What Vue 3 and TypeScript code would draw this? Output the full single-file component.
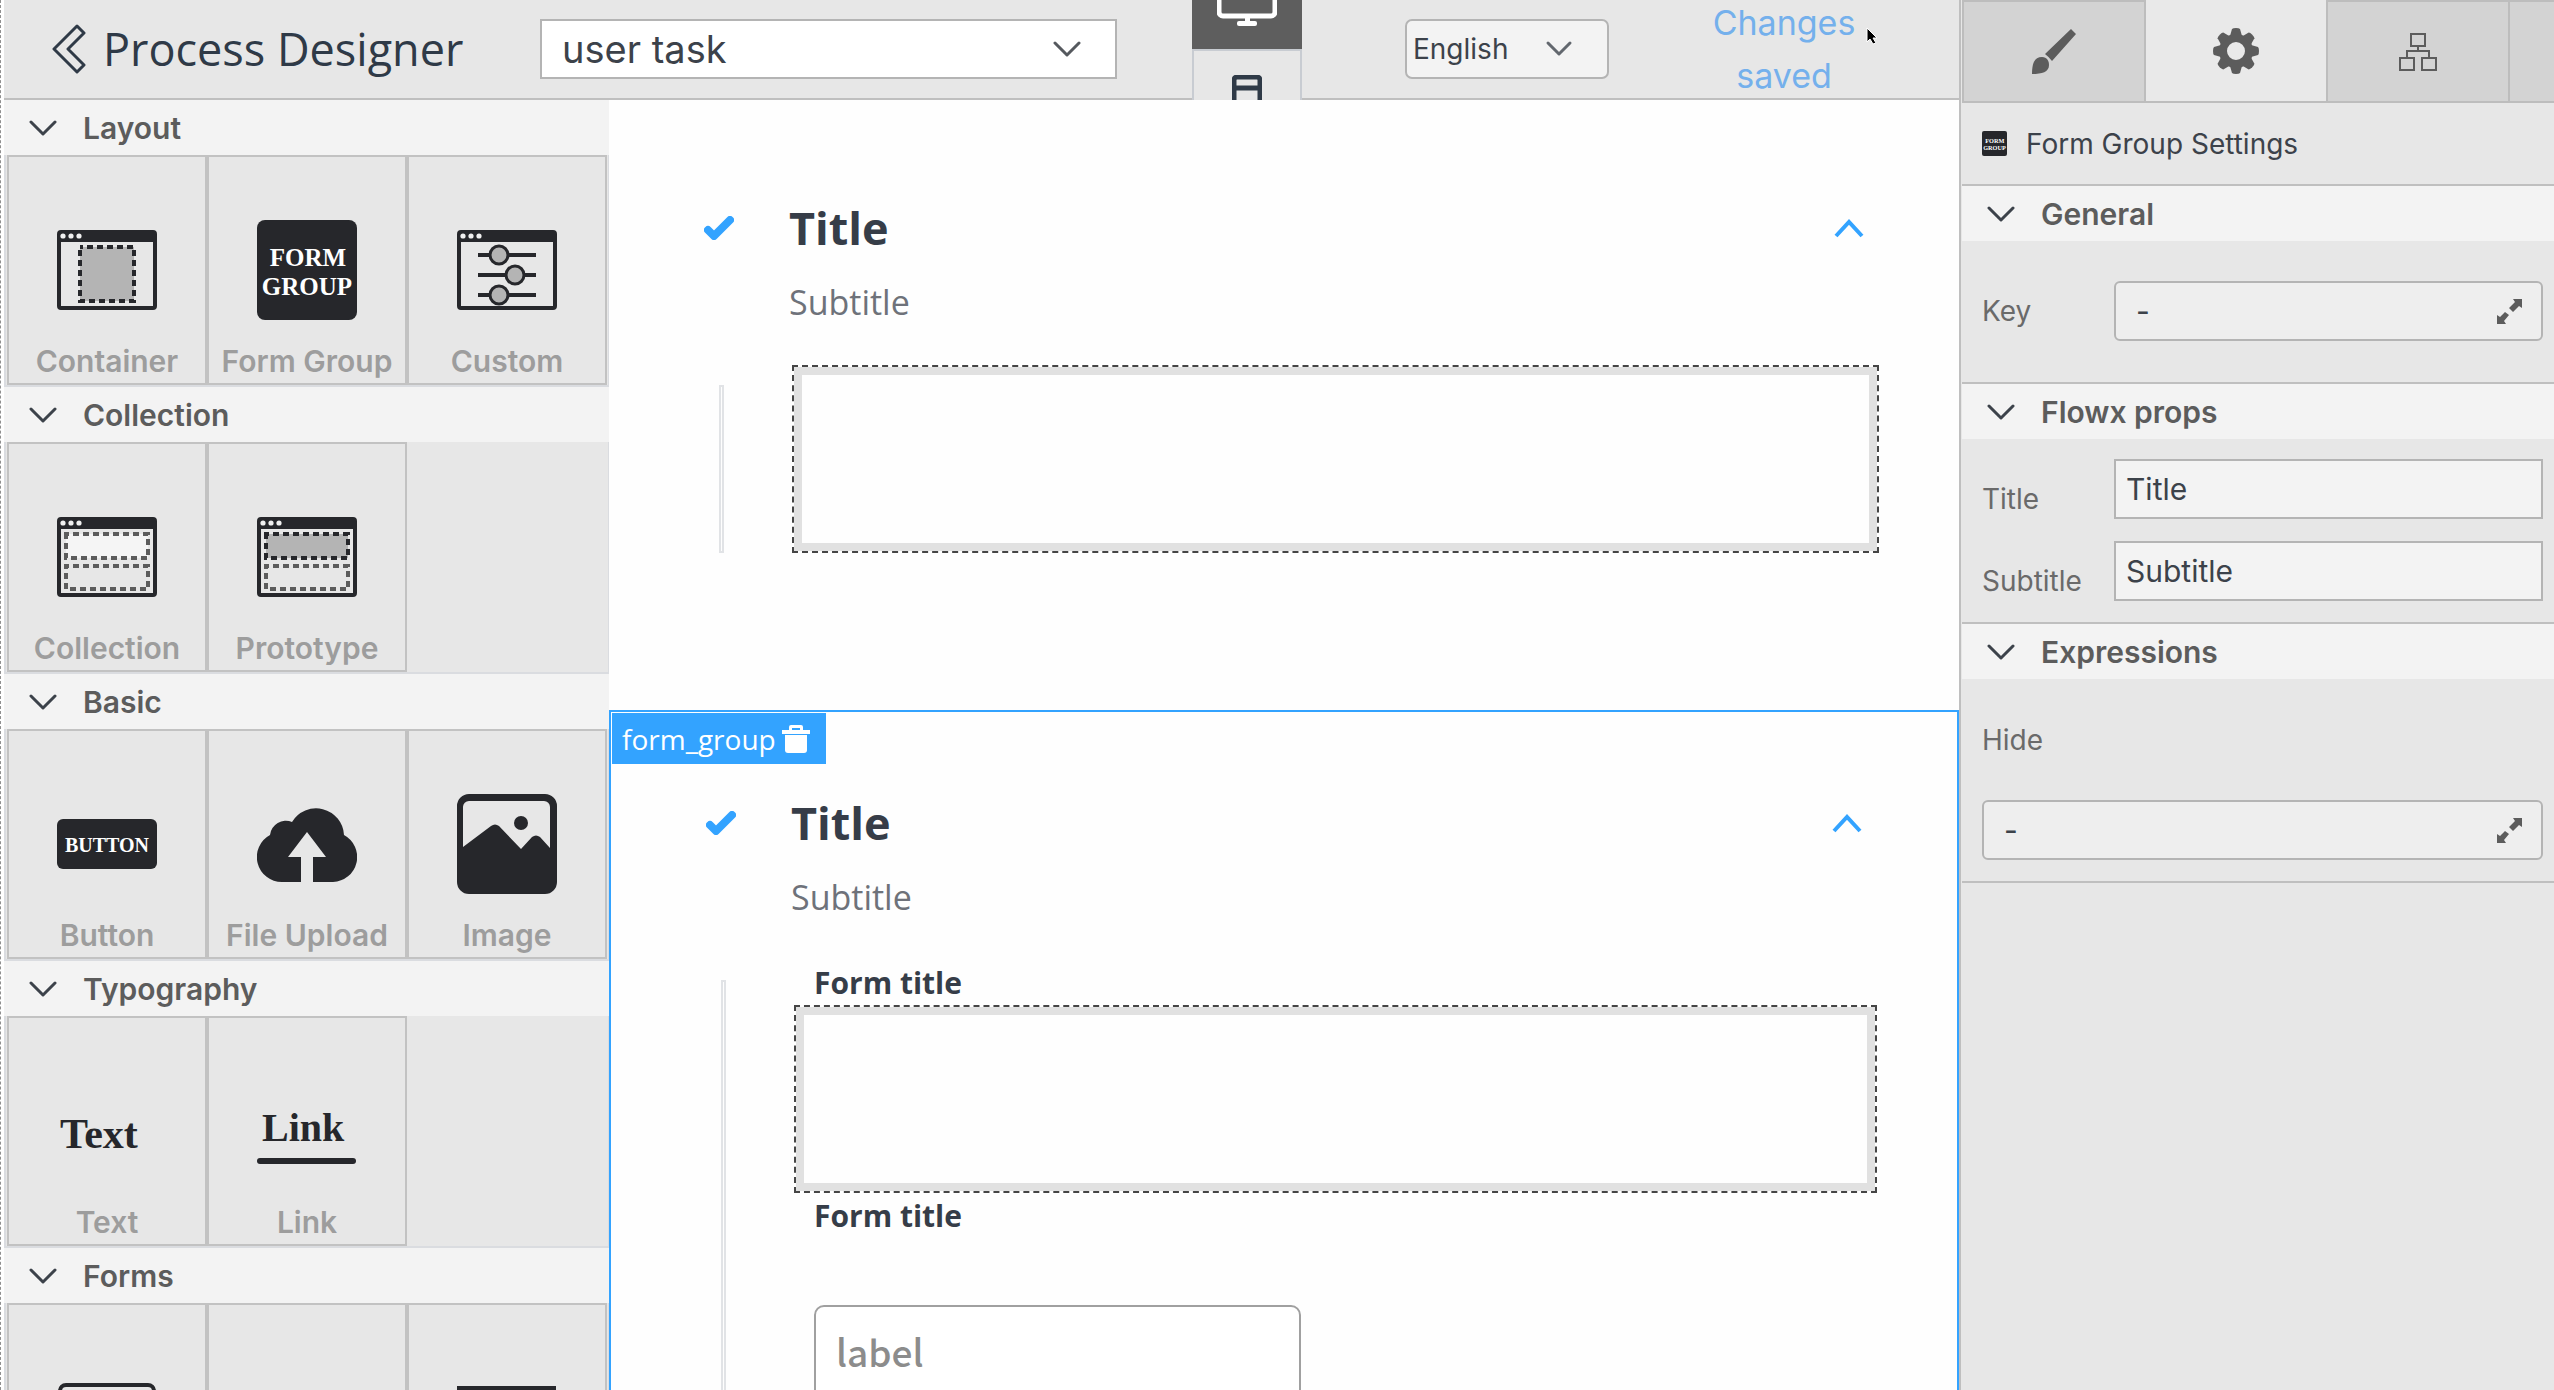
<script setup lang="ts">
import { ref } from 'vue'

interface PaletteItem {
  icon: string
  label: string
}
interface PaletteSection {
  title: string
  items: PaletteItem[]
}

const sections: PaletteSection[] = [
  {
    title: 'Layout',
    items: [
      { icon: 'container', label: 'Container' },
      { icon: 'group', label: 'Form Group' },
      { icon: 'custom', label: 'Custom' },
    ],
  },
  {
    title: 'Collection',
    items: [
      { icon: 'collection', label: 'Collection' },
      { icon: 'prototype', label: 'Prototype' },
    ],
  },
  {
    title: 'Basic',
    items: [
      { icon: 'button', label: 'Button' },
      { icon: 'upload', label: 'File Upload' },
      { icon: 'image', label: 'Image' },
    ],
  },
  {
    title: 'Typography',
    items: [
      { icon: 'text', label: 'Text' },
      { icon: 'link', label: 'Link' },
    ],
  },
  {
    title: 'Forms',
    items: [
      { icon: 'input', label: '' },
      { icon: 'blank', label: '' },
      { icon: 'select', label: '' },
    ],
  },
]

const windowIcons = ['container', 'custom', 'collection', 'prototype']
const teeth = [0, 45, 90, 135, 180, 225, 270, 315]

const task = ref('user task')
const language = ref('English')
const keyValue = ref('-')
const titleValue = ref('Title')
const subtitleValue = ref('Subtitle')
const hideValue = ref('-')
const fieldValue = ref('')
</script>

<template>
  <div class="app">
    <div class="workspace">
      <header class="topbar">
        <div class="brand">
          <button class="plain" type="button" aria-label="Back">
            <svg width="34" height="50" viewBox="0 0 34 50" fill="none" stroke="#2f3a47" stroke-width="3" stroke-linejoin="round">
              <path d="M25 2L2 25L25 48L32 41L16 25L32 9Z" />
            </svg>
          </button>
          <h1>Process Designer</h1>
        </div>
        <div class="picker task">
          <select v-model="task" aria-label="Task">
            <option>user task</option>
          </select>
          <svg width="28" height="18" viewBox="0 0 28 18" fill="none" stroke="#55595e" stroke-width="3" stroke-linecap="round" stroke-linejoin="round">
            <path d="M2 3L14 15L26 3" />
          </svg>
        </div>
        <div class="devices">
          <button class="device active" type="button" aria-label="Desktop">
            <svg width="60" height="52" viewBox="0 0 60 52">
              <rect x="2" y="2" width="56" height="40" rx="4" fill="none" stroke="#fff" stroke-width="5" />
              <path d="M28 42h5v9h-5z" fill="#fff" />
              <rect x="20" y="47" width="20" height="5" rx="2" fill="#fff" />
            </svg>
          </button>
          <button class="device" type="button" aria-label="Mobile">
            <svg width="30" height="48" viewBox="0 0 30 48" fill="none" stroke="#2f3a47" stroke-width="5">
              <rect x="2" y="2" width="26" height="44" rx="3" />
              <path d="M2 13h26" />
            </svg>
          </button>
        </div>
        <div class="picker language">
          <select v-model="language" aria-label="Language">
            <option>English</option>
          </select>
          <svg width="28" height="18" viewBox="0 0 28 18" fill="none" stroke="#62676e" stroke-width="3" stroke-linecap="round" stroke-linejoin="round">
            <path d="M3 3L14 14L25 3" />
          </svg>
        </div>
        <p class="status">Changes saved</p>
        <svg class="pointer" width="14" height="20" viewBox="0 0 14 20">
          <path d="M2 2V16L5 13L8 18L11 17L8 12H12Z" fill="#000" stroke="#fff" stroke-width="1" />
        </svg>
      </header>

      <div class="columns">
        <nav class="palette">
          <section v-for="section in sections" :key="section.title">
            <button class="fold" type="button">
              <svg width="28" height="18" viewBox="0 0 28 18" fill="none" stroke="#3c424a" stroke-width="3" stroke-linecap="round" stroke-linejoin="round">
                <path d="M2 3L14 15L26 3" />
              </svg>
              {{ section.title }}
            </button>
            <div class="tiles">
              <div v-for="item in section.items" :key="item.icon" class="tile">
                <svg width="100" height="100" viewBox="0 0 100 100">
                  <g v-if="windowIcons.includes(item.icon)">
                    <rect x="2" y="12" width="96" height="76" rx="2" fill="none" stroke="#26272b" stroke-width="4" />
                    <path d="M1 12h98v10H1z" fill="#26272b" />
                    <circle v-for="x in [6, 14, 22]" :key="x" :cx="x" cy="16" r="2.6" fill="#f0f0f0" />
                  </g>
                  <rect v-if="item.icon === 'container'" x="23" y="27" width="54" height="54" fill="#b4b4b4" stroke="#26272b" stroke-width="4" stroke-dasharray="6 4" stroke-dashoffset="3" />
                  <g v-if="item.icon === 'custom'" fill="#b4b4b4" stroke="#26272b" stroke-width="3">
                    <path d="M21 35h58M21 55h58M21 75h58" stroke-width="4" />
                    <circle cx="42" cy="35" r="9" />
                    <circle cx="58" cy="55" r="9" />
                    <circle cx="42" cy="75" r="9" />
                  </g>
                  <g v-if="item.icon === 'collection' || item.icon === 'prototype'" fill="none" stroke="#5c5c5c" stroke-width="4" stroke-dasharray="6 4" stroke-dashoffset="3">
                    <rect v-if="item.icon === 'collection'" x="9" y="27" width="82" height="24" fill="#f5f5f5" />
                    <rect v-else x="9" y="27" width="82" height="24" fill="#b4b4b4" stroke="#26272b" />
                    <rect x="9" y="59" width="82" height="23" />
                  </g>
                  <g v-if="item.icon === 'group'" class="glyph" font-size="25">
                    <rect width="100" height="100" rx="8" fill="#26272b" />
                    <text x="51" y="46" text-anchor="middle" fill="#fff">FORM</text>
                    <text x="50" y="75" text-anchor="middle" fill="#fff">GROUP</text>
                  </g>
                  <g v-if="item.icon === 'button'" class="glyph" font-size="20">
                    <rect y="25" width="100" height="50" rx="6" fill="#26272b" />
                    <text x="50" y="58" text-anchor="middle" fill="#fff">BUTTON</text>
                  </g>
                  <path v-if="item.icon === 'upload'" fill="#26272b" d="M25 88A25 25 0 0 1 13 41A16 16 0 0 1 35 28A28 28 0 0 1 87 41A25 25 0 0 1 76 88H56V63H69L50 38L31 63H44V88Z" />
                  <g v-if="item.icon === 'image'" fill="#26272b">
                    <path fill-rule="evenodd" d="M12 0H88A12 12 0 0 1 100 12V88A12 12 0 0 1 88 100H12A12 12 0 0 1 0 88V12A12 12 0 0 1 12 0ZM12 7A6 6 0 0 0 6 13V53L34 32Q38 29 42 32L64 55L75 43Q79 40 83 43L93 54V13A6 6 0 0 0 87 7Z" />
                    <circle cx="64" cy="29" r="7" />
                  </g>
                  <text v-if="item.icon === 'text'" class="glyph" x="3" y="67" font-size="42" fill="#26272b">Text</text>
                  <g v-if="item.icon === 'link'" class="glyph" font-size="40" fill="#26272b">
                    <text x="5" y="60">Link</text>
                    <rect y="77" width="99" height="6" rx="3" />
                  </g>
                  <rect v-if="item.icon === 'input'" x="3" y="17" width="94" height="66" rx="6" fill="none" stroke="#26272b" stroke-width="4" />
                  <rect v-if="item.icon === 'select'" y="18" width="99" height="64" fill="#26272b" />
                </svg>
                <span>{{ item.label }}</span>
              </div>
            </div>
          </section>
        </nav>

        <main class="canvas">
          <article class="group">
            <div class="group-head">
              <svg class="check" width="30" height="24" viewBox="0 0 30 24" fill="none" stroke="#33a3ff" stroke-width="8" stroke-linecap="round" stroke-linejoin="round">
                <path d="M4 14L10 20L26 4" />
              </svg>
              <h2>Title</h2>
              <button class="plain" type="button" aria-label="Collapse">
                <svg width="30" height="20" viewBox="0 0 30 20" fill="none" stroke="#33a3ff" stroke-width="4">
                  <path d="M2 18L15 4L28 18" />
                </svg>
              </button>
            </div>
            <p class="subtitle">Subtitle</p>
            <div class="group-body">
              <div class="rail"></div>
              <div class="content">
                <div class="dropzone"></div>
              </div>
            </div>
          </article>

          <article class="group selected">
            <div class="tag">
              form_group
              <button class="plain" type="button" aria-label="Delete">
                <svg width="28" height="28" viewBox="0 0 28 28" fill="#fff">
                  <path fill-rule="evenodd" d="M7 5V2Q7 0 9 0H19Q21 0 21 2V5H28V9H0V5ZM10 3V5H18V3Z" />
                  <path d="M3 10H25V25Q25 28 22 28H6Q3 28 3 25Z" />
                </svg>
              </button>
            </div>
            <div class="group-head">
              <svg class="check" width="30" height="24" viewBox="0 0 30 24" fill="none" stroke="#33a3ff" stroke-width="8" stroke-linecap="round" stroke-linejoin="round">
                <path d="M4 14L10 20L26 4" />
              </svg>
              <h2>Title</h2>
              <button class="plain" type="button" aria-label="Collapse">
                <svg width="30" height="20" viewBox="0 0 30 20" fill="none" stroke="#33a3ff" stroke-width="4">
                  <path d="M2 18L15 4L28 18" />
                </svg>
              </button>
            </div>
            <p class="subtitle">Subtitle</p>
            <div class="group-body">
              <div class="rail"></div>
              <div class="content">
                <h3>Form title</h3>
                <div class="dropzone"></div>
                <h3>Form title</h3>
                <input v-model="fieldValue" class="field" type="text" placeholder="label" aria-label="label" />
              </div>
            </div>
          </article>
        </main>
      </div>
    </div>

    <aside class="inspector">
      <div class="tabs">
        <button class="tab" type="button" aria-label="Styling">
          <svg width="46" height="46" viewBox="0 0 46 46" fill="#5c5c5c">
            <path d="M40 0L45 5L21 32Q18 28 14 25Z" />
            <path d="M1 45C1 35 3 28 11 28C16 28 18 32 18 36C18 43 11 45 1 45Z" />
          </svg>
        </button>
        <button class="tab current" type="button" aria-label="Settings">
          <svg width="46" height="46" viewBox="-23 -23 46 46">
            <circle r="13" fill="none" stroke="#5c5c5c" stroke-width="8" />
            <path v-for="angle in teeth" :key="angle" :transform="`rotate(${angle})`" d="M-6 -15L-4 -22Q-3 -23 0 -23Q3 -23 4 -22L6 -15Z" fill="#5c5c5c" />
          </svg>
        </button>
        <button class="tab" type="button" aria-label="Tree">
          <svg width="38" height="38" viewBox="0 0 38 38" fill="none" stroke="#5c5c5c" stroke-width="2">
            <path d="M12 1H26V13H12ZM1 25H15V37H1ZM23 25H37V37H23ZM19 13V18M8 25V18H30V25" />
          </svg>
        </button>
        <div class="tab-rest"></div>
      </div>

      <div class="heading">
        <svg width="25" height="25" viewBox="0 0 100 100">
          <g class="glyph" font-size="25">
            <rect width="100" height="100" rx="8" fill="#26272b" />
            <text x="51" y="46" text-anchor="middle" fill="#fff">FORM</text>
            <text x="50" y="75" text-anchor="middle" fill="#fff">GROUP</text>
          </g>
        </svg>
        Form Group Settings
      </div>

      <section class="panel">
        <button class="fold" type="button">
          <svg width="28" height="18" viewBox="0 0 28 18" fill="none" stroke="#3c424a" stroke-width="3" stroke-linecap="round" stroke-linejoin="round">
            <path d="M2 3L14 15L26 3" />
          </svg>
          General
        </button>
        <div class="rows spacious">
          <div class="row">
            <label for="key">Key</label>
            <div class="expandable">
              <input id="key" v-model="keyValue" type="text" />
              <button class="plain" type="button" aria-label="Expand key">
                <svg width="25" height="25" viewBox="0 0 25 25" fill="#5c5c5c">
                  <path d="M16 0H25V9L22 7L16 13L12 9L18 3ZM0 16L3 18L8 13L12 16L7 22L9 25H0Z" />
                </svg>
              </button>
            </div>
          </div>
        </div>
      </section>

      <section class="panel">
        <button class="fold" type="button">
          <svg width="28" height="18" viewBox="0 0 28 18" fill="none" stroke="#3c424a" stroke-width="3" stroke-linecap="round" stroke-linejoin="round">
            <path d="M2 3L14 15L26 3" />
          </svg>
          Flowx props
        </button>
        <div class="rows">
          <div class="row low">
            <label for="title">Title</label>
            <input id="title" v-model="titleValue" class="box" type="text" />
          </div>
          <div class="row low">
            <label for="subtitle">Subtitle</label>
            <input id="subtitle" v-model="subtitleValue" class="box" type="text" />
          </div>
        </div>
      </section>

      <section class="panel">
        <button class="fold" type="button">
          <svg width="28" height="18" viewBox="0 0 28 18" fill="none" stroke="#3c424a" stroke-width="3" stroke-linecap="round" stroke-linejoin="round">
            <path d="M2 3L14 15L26 3" />
          </svg>
          Expressions
        </button>
        <div class="rows stacked">
          <label for="hide">Hide</label>
          <div class="expandable">
            <input id="hide" v-model="hideValue" type="text" />
            <button class="plain" type="button" aria-label="Expand hide">
              <svg width="25" height="25" viewBox="0 0 25 25" fill="#5c5c5c">
                <path d="M16 0H25V9L22 7L16 13L12 9L18 3ZM0 16L3 18L8 13L12 16L7 22L9 25H0Z" />
              </svg>
            </button>
          </div>
        </div>
      </section>
    </aside>
  </div>
</template>

<style>
body {
  background: #fff;
}
</style>

<style scoped>
* {
  box-sizing: border-box;
}
h1,
h2,
h3,
p {
  margin: 0;
}
button,
input,
select {
  margin: 0;
  font-family: inherit;
}
svg {
  display: block;
  flex: none;
}

.app {
  display: flex;
  height: 100vh;
  padding-left: 3px;
  border-left: 1px dashed #8f8f8f;
  overflow: hidden;
  font-family: Inter, "Liberation Sans", sans-serif;
  color: #3c424a;
}
.workspace {
  flex: 1;
  min-width: 0;
  display: flex;
  flex-direction: column;
}
.plain {
  display: block;
  padding: 0;
  border: 0;
  background: none;
}
.glyph {
  font-family: "Liberation Serif", serif;
  font-weight: 700;
}

.topbar {
  position: relative;
  flex: none;
  display: flex;
  align-items: center;
  height: 100px;
  padding: 0 75px 2px 48px;
  overflow: hidden;
  background: #e7e7e7;
  box-shadow: inset 0 -2px #bfbfbf;
}
.brand {
  flex: none;
  display: flex;
  align-items: center;
  gap: 17px;
  width: 488px;
}
h1 {
  font: 400 45px/60px "Open Sans", sans-serif;
  color: #2f3a47;
}
.picker {
  display: grid;
  align-items: center;
}
.picker > * {
  grid-area: 1 / 1;
}
.picker svg {
  justify-self: end;
  pointer-events: none;
}
.picker select {
  appearance: none;
  width: 100%;
  height: 60px;
  border: 2px solid #b4b4b4;
  color: #3c424a;
}
.task {
  flex: 1;
}
.task select {
  padding: 0 20px;
  background: #fff;
  font-size: 38px;
}
.task svg {
  margin-right: 36px;
}
.devices {
  flex: none;
  width: 110px;
  margin: 0 103px 0 75px;
  background: #e7e7e7;
}
.device {
  display: flex;
  justify-content: center;
  align-items: center;
  width: 100%;
  height: 99px;
  padding: 0;
  border: 2px solid #c8ccd2;
  background: #e7e7e7;
}
.device.active {
  border-color: #5e5e5e;
  background: #5e5e5e;
}
.language {
  flex: none;
  width: 204px;
}
.language select {
  padding: 0 6px;
  border-radius: 7px;
  background: #f3f3f3;
  font-size: 28px;
}
.language svg {
  margin-right: 36px;
}
.status {
  flex: none;
  width: 200px;
  margin-left: 75px;
  font-size: 34px;
  line-height: 53px;
  text-align: center;
  color: #74b0ec;
}
.pointer {
  position: absolute;
  top: 26px;
  right: 80px;
}

.columns {
  flex: 1;
  min-height: 0;
  display: flex;
}
.palette {
  flex: none;
  width: 605px;
  overflow: hidden;
  background: #e7e7e7;
}
.fold {
  display: flex;
  align-items: center;
  gap: 26px;
  width: 100%;
  height: 55px;
  padding: 0 25px;
  border: 0;
  background: #f3f3f3;
  font-size: 30px;
  font-weight: 600;
  line-height: 40px;
  color: #5c5c5c;
}
.tiles {
  display: grid;
  grid-template-columns: repeat(3, 1fr);
  padding: 0 1px;
  border: solid #dadce0;
  border-width: 0 1px 2px 2px;
}
.tile {
  display: flex;
  flex-direction: column;
  align-items: center;
  gap: 23px;
  height: 230px;
  padding-top: 63px;
  border: 2px solid #c2c2c2;
  font-size: 30px;
  font-weight: 600;
  line-height: 36px;
  white-space: nowrap;
  color: #9d9d9d;
}

.canvas {
  flex: 1;
  min-width: 0;
  padding-top: 17px;
  overflow: hidden;
  background: #fefefe;
}
.group {
  position: relative;
  padding: 81px 0 157px;
}
.selected {
  border: 2px solid #33a3ff;
}
.tag {
  position: absolute;
  top: 1px;
  left: 1px;
  display: flex;
  align-items: center;
  gap: 6px;
  height: 51px;
  padding: 0 16px 0 10px;
  background: #33a3ff;
  font: 400 28px/36px "Open Sans", sans-serif;
  color: #fff;
}
.group-head {
  display: flex;
  align-items: center;
  padding: 0 95px;
}
h2 {
  flex: 1;
  padding-left: 55px;
  font: 700 45px/60px "Open Sans", sans-serif;
  color: #363d48;
}
.subtitle {
  padding: 21px 0 40px 180px;
  font: 400 34px/46px "Open Sans", sans-serif;
  color: #6e727a;
}
.group-body {
  display: flex;
  gap: 68px;
  padding: 0 80px 0 110px;
}
.rail {
  flex: none;
  width: 5px;
  margin-top: 20px;
  border: 2px solid #e1e3e6;
}
.content {
  flex: 1;
}
h3 {
  padding-left: 20px;
  font: 700 30px/45px "Open Sans", sans-serif;
  color: #363d48;
}
.dropzone {
  height: 188px;
  border: 2px dashed #454545;
  background: #fefefe;
  box-shadow: inset 0 0 0 8px #e1e1e1;
}
.field {
  display: block;
  width: 487px;
  max-width: 100%;
  height: 98px;
  margin: 67px 0 0 20px;
  padding: 0 20px 6px;
  border: 2px solid #a0a0a0;
  border-radius: 10px;
  background: #fff;
  font: 500 37px/52px "Noto Sans CJK SC", sans-serif;
}
.field::placeholder {
  color: #8c8c8c;
  opacity: 1;
}

.inspector {
  flex: none;
  width: 595px;
  padding-left: 1px;
  border-left: 2px solid #bfbfbf;
  background: #e7e7e7;
}
.tabs {
  display: flex;
  height: 103px;
}
.tab,
.tab-rest {
  border: 2px solid #bdbdbd;
  background: #d3d3d3;
}
.tab {
  flex: none;
  display: flex;
  justify-content: center;
  align-items: center;
  width: 184px;
  padding: 0;
}
.tab.current {
  width: 180px;
  border-width: 0 0 2px;
  background: #e9e9e9;
}
.tab-rest {
  flex: 1;
  border-width: 2px 0;
}
.heading {
  display: flex;
  align-items: center;
  gap: 19px;
  height: 81px;
  padding: 0 20px;
  font-size: 28px;
  line-height: 36px;
}
.panel {
  border-top: 2px solid #bfbfbf;
}
.panel:last-child {
  border-bottom: 2px solid #bfbfbf;
}
.rows {
  display: flex;
  flex-direction: column;
  gap: 22px;
  padding: 20px 11px 21px 20px;
}
.rows.spacious {
  padding-top: 40px;
  padding-bottom: 41px;
}
.rows.stacked {
  gap: 42px;
  padding-top: 43px;
}
.row {
  display: flex;
  align-items: center;
}
.row label {
  flex: none;
  width: 132px;
}
label {
  font-size: 28px;
  line-height: 36px;
  color: #6a6a6a;
}
.low label {
  padding-top: 20px;
}
.box {
  flex: 1;
  min-width: 0;
  height: 60px;
  padding: 0 10px;
  border: 2px solid #b4b4b4;
  border-radius: 0;
  background: #f3f3f3;
  font-size: 30px;
  color: #3c424a;
}
.expandable {
  flex: 1;
  min-width: 0;
  display: flex;
  align-items: center;
  height: 60px;
  padding: 0 19px 0 20px;
  border: 2px solid #b4b4b4;
  border-radius: 6px;
  background: #eee;
}
.rows.stacked .expandable {
  flex: none;
}
.expandable input {
  flex: 1;
  width: 0;
  min-width: 0;
  padding: 0;
  border: 0;
  background: none;
  font-size: 30px;
  color: #3c424a;
}
</style>
